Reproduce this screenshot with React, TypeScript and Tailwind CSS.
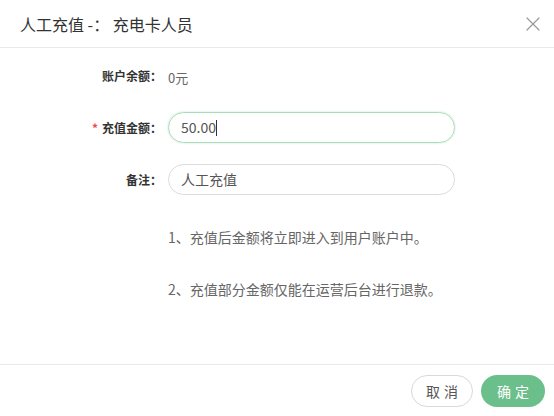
import { X } from "lucide-react";

const font = "font-['Microsoft_YaHei','Noto_Sans_CJK_SC',sans-serif]";

// Label + pill-shaped field row
const FormRow = ({
  label,
  required,
  children,
  className = "",
}: {
  label: string;
  required?: boolean;
  children: React.ReactNode;
  className?: string;
}) => (
  <div className={`flex items-center h-[31px] ${className}`}>
    <div className="w-[162px] text-right text-[12px] font-bold text-[#333]">
      {required && <span className="text-[#f04848] mr-[4px]">*</span>}
      {label}
    </div>
    <div className="ml-[6px] w-[287px]">{children}</div>
  </div>
);

export default function App() {
  return (
    <div className={`w-[554px] h-[416px] bg-white flex flex-col ${font}`}>
      {/* Header */}
      <div className="h-[48px] flex items-center justify-between pl-[20px] pr-[9px] border-b border-[#e9e9e9]">
        <h1 className="text-[16px] text-[#333]">人工充值 -： 充电卡人员</h1>
        <X size={24} strokeWidth={1.2} className="text-[#999]" />
      </div>

      {/* Body */}
      <div className="flex-1 flex flex-col pt-[12px]">
        <FormRow label="账户余额：">
          <span className="text-[13px] text-[#666]">0元</span>
        </FormRow>

        <FormRow label="充值金额：" required className="mt-[21px]">
          <div className="h-[31px] rounded-full border border-[#a9dcba] shadow-[0_0_2px_rgba(108,192,140,0.45)] flex items-center px-[12px] text-[14px] text-[#555]">
            50.00
            <span className="inline-block w-px h-[16px] bg-[#333]" />
          </div>
        </FormRow>

        <FormRow label="备注：" className="mt-[21px]">
          <div className="h-[31px] rounded-full border border-[#dcdcdc] flex items-center px-[12px] text-[14px] text-[#555]">
            人工充值
          </div>
        </FormRow>

        <div className="ml-[168px] mt-[32px] flex flex-col gap-[32px] text-[14px] text-[#666] leading-[20px]">
          <p>1、充值后金额将立即进入到用户账户中。</p>
          <p>2、充值部分金额仅能在运营后台进行退款。</p>
        </div>
      </div>

      {/* Footer */}
      <div className="h-[52px] border-t border-[#e9e9e9] flex items-start justify-end gap-[8px] pt-[10px] pr-[9px]">
        <button className="h-[32px] w-[62px] rounded-full border border-[#d9d9d9] bg-white text-[14px] text-[#555] tracking-[4px] pl-[4px]">
          取消
        </button>
        <button className="h-[32px] w-[64px] rounded-full bg-[#6bbf8a] text-[14px] text-white tracking-[4px] pl-[4px]">
          确定
        </button>
      </div>
    </div>
  );
}
